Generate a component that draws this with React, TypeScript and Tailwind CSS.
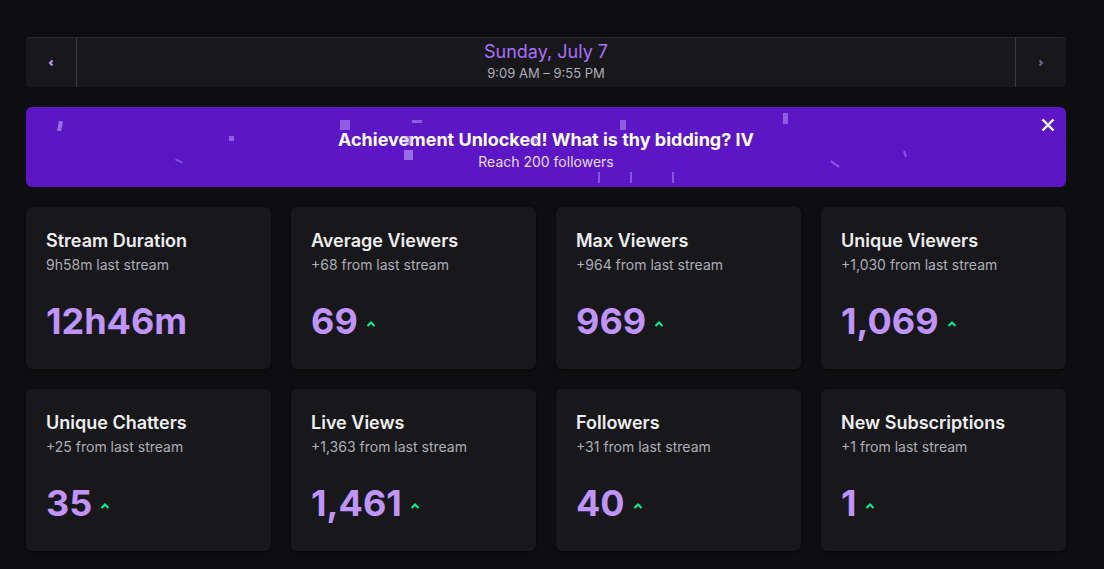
import React from "react";

type Stat = { title: string; sub: string; value: string; up?: boolean };

const stats: Stat[] = [
  { title: "Stream Duration", sub: "9h58m last stream", value: "12h46m" },
  { title: "Average Viewers", sub: "+68 from last stream", value: "69", up: true },
  { title: "Max Viewers", sub: "+964 from last stream", value: "969", up: true },
  { title: "Unique Viewers", sub: "+1,030 from last stream", value: "1,069", up: true },
  { title: "Unique Chatters", sub: "+25 from last stream", value: "35", up: true },
  { title: "Live Views", sub: "+1,363 from last stream", value: "1,461", up: true },
  { title: "Followers", sub: "+31 from last stream", value: "40", up: true },
  { title: "New Subscriptions", sub: "+1 from last stream", value: "1", up: true },
];

// confetti bits scattered over the achievement banner (banner-relative px)
const confetti: { l: number; t: number; w: number; h: number; r: number; o: number }[] = [
  { l: 32, t: 14, w: 4, h: 10, r: 12, o: 0.55 },
  { l: 203, t: 29, w: 5, h: 5, r: 0, o: 0.45 },
  { l: 149, t: 53, w: 8, h: 2, r: 25, o: 0.35 },
  { l: 314, t: 13, w: 10, h: 10, r: 0, o: 0.45 },
  { l: 386, t: 13, w: 10, h: 3, r: 0, o: 0.45 },
  { l: 378, t: 29, w: 8, h: 9, r: 0, o: 0.5 },
  { l: 378, t: 43, w: 9, h: 10, r: 0, o: 0.55 },
  { l: 594, t: 13, w: 6, h: 10, r: 0, o: 0.45 },
  { l: 506, t: 30, w: 5, h: 6, r: 0, o: 0.4 },
  { l: 757, t: 6, w: 5, h: 11, r: 0, o: 0.45 },
  { l: 572, t: 65, w: 1.5, h: 11, r: 0, o: 0.4 },
  { l: 604, t: 65, w: 1.5, h: 11, r: 0, o: 0.4 },
  { l: 646, t: 65, w: 1.5, h: 11, r: 0, o: 0.4 },
  { l: 804, t: 56, w: 10, h: 2, r: 35, o: 0.4 },
  { l: 878, t: 44, w: 2, h: 6, r: -20, o: 0.4 },
];

function ChevronUp() {
  return (
    <svg width="10" height="8" viewBox="0 0 10 8" className="shrink-0">
      <polyline points="1.5,6 5,2.5 8.5,6" fill="none" stroke="#00f593" strokeWidth="2" />
    </svg>
  );
}

function StatCard({ s }: { s: Stat }) {
  return (
    <div className="h-[162px] rounded-md bg-[#18181b] px-5 pt-5 shadow-[0_1px_3px_rgba(0,0,0,0.5)]">
      <div className="text-[18px] font-semibold leading-7 text-[#efeff1]">{s.title}</div>
      <div className="text-[14px] leading-5 text-[#adadb8]">{s.sub}</div>
      <div className="mt-[26px] flex items-center gap-[8px]">
        <span className="text-[36px] font-bold leading-10 text-[#bf94ff]">{s.value}</span>
        {s.up && (
          <span className="mt-[6px]">
            <ChevronUp />
          </span>
        )}
      </div>
    </div>
  );
}

export default function App() {
  return (
    <div
      className="min-h-screen bg-[#0e0e10] pl-[26px] pt-[37px]"
      style={{ fontFamily: "Inter, 'Noto Sans', sans-serif" }}
    >
      <div className="w-[1040px]">
        {/* date switcher */}
        <div className="flex h-[50px] rounded-sm border-t border-[#26262b] bg-[#18181b]">
          <button className="flex w-[51px] items-center justify-center border-r border-[#3a3a3d]">
            <svg width="8" height="8" viewBox="0 0 8 8">
              <polyline points="5.5,1.5 3,4 5.5,6.5" fill="none" stroke="#bf94ff" strokeWidth="2" />
            </svg>
          </button>
          <div className="flex flex-1 flex-col items-center pt-[2px]">
            <div className="text-[18px] leading-6 text-[#a970ff]">Sunday, July 7</div>
            <div className="mt-[1px] text-[13px] leading-4 text-[#adadb8]">9:09 AM – 9:55 PM</div>
          </div>
          <button className="flex w-[51px] items-center justify-center border-l border-[#3a3a3d]">
            <svg width="8" height="8" viewBox="0 0 8 8">
              <polyline points="2.5,1.5 5,4 2.5,6.5" fill="none" stroke="#6f5f9a" strokeWidth="2" />
            </svg>
          </button>
        </div>

        {/* achievement banner */}
        <div className="relative mt-[20px] flex h-[80px] flex-col items-center overflow-hidden rounded-md bg-[#5c16c5] pt-[21px]">
          <div className="text-[18px] font-bold leading-6 text-white">
            Achievement Unlocked! What is thy bidding? IV
          </div>
          <div className="text-[14px] leading-5 text-[#e5dcf7]">Reach 200 followers</div>
          {confetti.map((c, i) => (
            <span
              key={i}
              className="absolute bg-[#c9b8ff]"
              style={{
                left: c.l,
                top: c.t,
                width: c.w,
                height: c.h,
                opacity: c.o,
                transform: `rotate(${c.r}deg)`,
              }}
            />
          ))}
          <button className="absolute right-[10px] top-[10px] flex h-[16px] w-[16px] items-center justify-center">
            <svg width="16" height="16" viewBox="0 0 16 16">
              <path d="M2.5 2.5 L13.5 13.5 M13.5 2.5 L2.5 13.5" stroke="white" strokeWidth="2.4" />
            </svg>
          </button>
        </div>

        {/* stat cards */}
        <div className="mt-[20px] grid grid-cols-4 gap-[20px]">
          {stats.map((s) => (
            <StatCard key={s.title} s={s} />
          ))}
        </div>
      </div>
    </div>
  );
}
